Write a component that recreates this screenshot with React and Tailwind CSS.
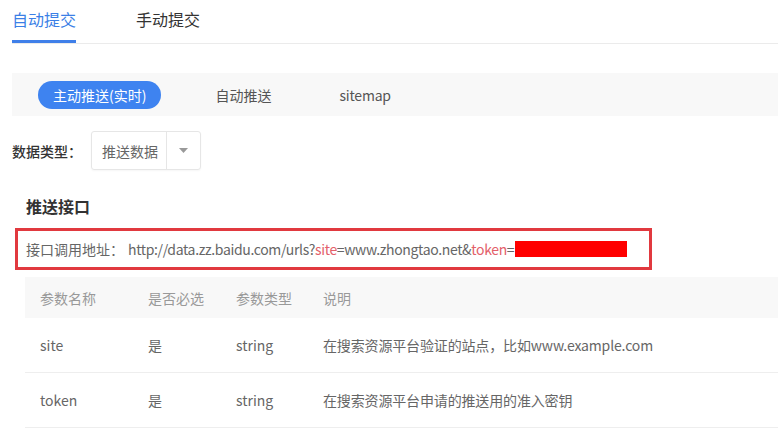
import React from "react";

export default function App() {
  const rows = [
    ["site", "是", "string", "在搜索资源平台验证的站点，比如www.example.com"],
    ["token", "是", "string", "在搜索资源平台申请的推送用的准入密钥"],
  ];
  return (
    <div className="w-[778px] h-[435px] overflow-hidden bg-white font-['Noto_Sans_CJK_SC','Noto_Sans',sans-serif]">
      {/* Tabs */}
      <div className="ml-3 flex gap-[60px] h-[44px] border-b border-[#ebebeb]">
        <div className="h-[43px] pt-[7px] text-base leading-6 text-[#3b7fe6] border-b-[3px] border-[#3f7fe9]">自动提交</div>
        <div className="h-[43px] pt-[7px] text-base leading-6 text-[#333]">手动提交</div>
      </div>

      {/* Sub tabs bar */}
      <div className="ml-3 mt-[29px] h-[43px] bg-[#f8f8f8] flex items-center pl-[26px] gap-10 text-sm">
        <div className="h-[28px] px-[15px] rounded-full bg-[#3e83f0] text-white flex items-center">主动推送(实时)</div>
        <div className="px-[14px] text-[#555]">自动推送</div>
        <div className="px-[14px] text-[#555] tracking-[-0.2px]">sitemap</div>
      </div>

      {/* Data type */}
      <div className="ml-3 mt-[15px] flex items-center">
        <div className="w-[79px] text-sm font-medium text-[#333]">数据类型：</div>
        <div className="w-[110px] h-[39px] border border-[#e6e6e6] rounded-[3px] flex shadow-[0_1px_2px_rgba(0,0,0,0.04)]">
          <div className="w-[75px] pl-[10px] flex items-center text-sm text-[#666] border-r border-[#e6e6e6]">推送数据</div>
          <div className="flex-1 flex items-center justify-center">
            <svg width="9" height="5" viewBox="0 0 9 5"><path d="M0 0h9L4.5 5z" fill="#999" /></svg>
          </div>
        </div>
      </div>

      {/* Heading */}
      <div className="ml-[26px] mt-[24px] text-base leading-6 font-bold text-[#333]">推送接口</div>

      {/* Red box */}
      <div className="ml-[15px] mt-[10px] w-[637px] h-[42px] border-[3px] border-[#e1393f] flex items-center pl-2 text-sm text-[#666] whitespace-nowrap">
        <span>接口调用地址：</span>
        <span className="ml-[4px] tracking-[-0.35px]">http://data.zz.baidu.com/urls?</span>
        <span className="text-[#e3606a] tracking-[-0.35px]">site</span>
        <span className="tracking-[-0.35px]">=www.zhongtao.net&amp;</span>
        <span className="text-[#e3606a] tracking-[-0.35px]">token</span>
        <span>=</span>
        <span className="inline-block w-[112px] h-[16px] bg-[#ff0000]"></span>
      </div>

      {/* Table */}
      <div className="ml-[25px] mt-[7px] w-[760px]">
        <div className="h-[41px] bg-[#f8f8f8] grid grid-cols-[108px_88px_87px_1fr] items-center pl-[15px] text-sm text-[#999]">
          <div>参数名称</div>
          <div>是否必选</div>
          <div>参数类型</div>
          <div>说明</div>
        </div>
        {rows.map((r) => (
          <div key={r[0]} className="h-[55px] border-b border-[#eeeeee] grid grid-cols-[108px_88px_87px_1fr] items-center pl-[15px] text-sm text-[#666]">
            {r.map((c, i) => (
              <div key={i} className={i === 3 ? "tracking-[-0.15px]" : ""}>{c}</div>
            ))}
          </div>
        ))}
      </div>
    </div>
  );
}
